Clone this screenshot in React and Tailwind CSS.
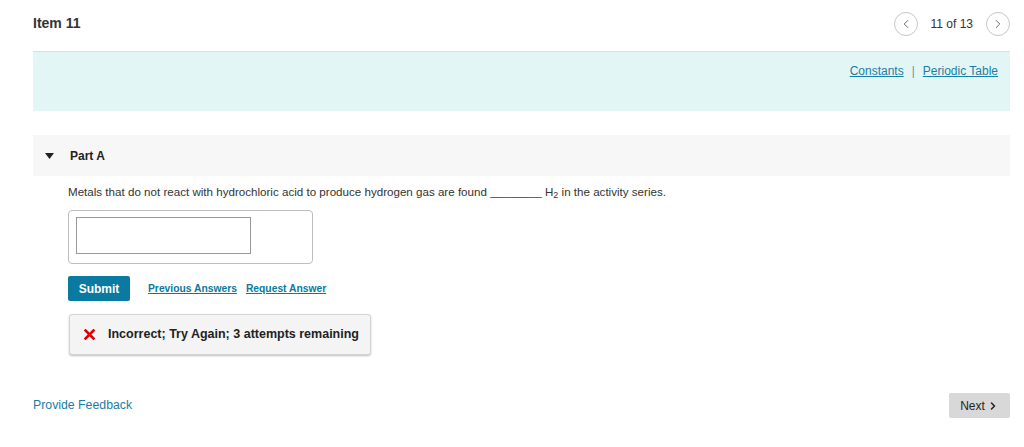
import { ChevronLeft, ChevronRight } from 'lucide-react';

export default function App() {
    return (
        <div className="w-[1024px] h-[447px] bg-white font-['Liberation_Sans',Arial,sans-serif] text-[#333] overflow-hidden">
            <div className="pl-[33px] pr-[14px]">
                {/* header */}
                <div className="h-[51px] flex items-center justify-between">
                    <h1 className="text-[14px] font-bold text-[#333] -mt-[5px]">Item 11</h1>
                    <div className="flex items-center -mt-[4px]">
                        <button className="w-[24px] h-[24px] rounded-full border border-[#c8c8c8] flex items-center justify-center text-[#555]">
                            <ChevronLeft className="w-[14px] h-[14px]" strokeWidth={1.5} />
                        </button>
                        <span className="text-[12px] text-[#333] mx-[13px]">11 of 13</span>
                        <button className="w-[24px] h-[24px] rounded-full border border-[#c8c8c8] flex items-center justify-center text-[#555]">
                            <ChevronRight className="w-[14px] h-[14px]" strokeWidth={1.5} />
                        </button>
                    </div>
                </div>

                {/* resources panel */}
                <div className="h-[60px] bg-[#e2f6f6] border-t border-[#d3e3e3] flex justify-end pr-[12px] pt-[10px]">
                    <div className="text-[12px] text-[#1a7ea3] flex items-start gap-[8px]">
                        <a className="underline">Constants</a>
                        <span className="text-[#888]">|</span>
                        <a className="underline">Periodic Table</a>
                    </div>
                </div>

                {/* Part A */}
                <div className="mt-[24px] h-[41px] bg-[#f7f7f7] flex items-center">
                    <svg className="ml-[12px] w-[9px] h-[6px]" viewBox="0 0 9 6">
                        <path d="M0 0 L9 0 L4.5 6 Z" fill="#222" />
                    </svg>
                    <span className="ml-[16px] text-[12px] font-bold text-[#222]">Part A</span>
                </div>

                <div className="pl-[35px]">
                    <p className="mt-[9px] text-[11.6px] text-[#333] leading-[14px]">
                        Metals that do not react with hydrochloric acid to produce hydrogen gas are found ________ H<sub className="text-[9px]">2</sub> in the activity series.
                    </p>

                    <div className="mt-[11px] w-[245px] h-[54px] border border-[#bdbdbd] rounded-[4px] pl-[7px] pt-[6px]">
                        <div className="w-[175px] h-[37px] border border-[#999] bg-white" />
                    </div>

                    <div className="mt-[12px] flex items-center">
                        <button className="w-[62px] h-[25px] bg-[#0a7aa0] text-white text-[12px] font-bold rounded-[2px]">Submit</button>
                        <a className="ml-[18px] text-[10.3px] font-bold text-[#0a7aa0] underline">Previous Answers</a>
                        <a className="ml-[9px] text-[10.3px] font-bold text-[#0a7aa0] underline">Request Answer</a>
                    </div>

                    <div className="mt-[13px] ml-[1px] w-[302px] h-[41px] bg-[#f4f4f4] border border-[#d4d4d4] rounded-[3px] shadow-[0_1px_2px_rgba(0,0,0,0.25)] flex items-center">
                        <svg className="ml-[14px] w-[11px] h-[11px]" viewBox="0 0 11 11">
                            <path d="M1.5 1.5 L9.5 9.5 M9.5 1.5 L1.5 9.5" stroke="#e00000" strokeWidth="2.6" strokeLinecap="square" />
                        </svg>
                        <span className="ml-[13px] text-[12.5px] font-bold text-[#222]">Incorrect; Try Again; 3 attempts remaining</span>
                    </div>
                </div>

                {/* footer */}
                <div className="mt-[38px] flex items-center justify-between">
                    <a className="text-[12.3px] text-[#1a7ea3]">Provide Feedback</a>
                    <button className="w-[61px] h-[25px] bg-[#d8d8d8] rounded-[2px] text-[12px] text-[#222] flex items-center justify-center gap-[2px]">
                        Next
                        <ChevronRight className="w-[12px] h-[12px]" strokeWidth={3} />
                    </button>
                </div>
            </div>
        </div>
    );
}
